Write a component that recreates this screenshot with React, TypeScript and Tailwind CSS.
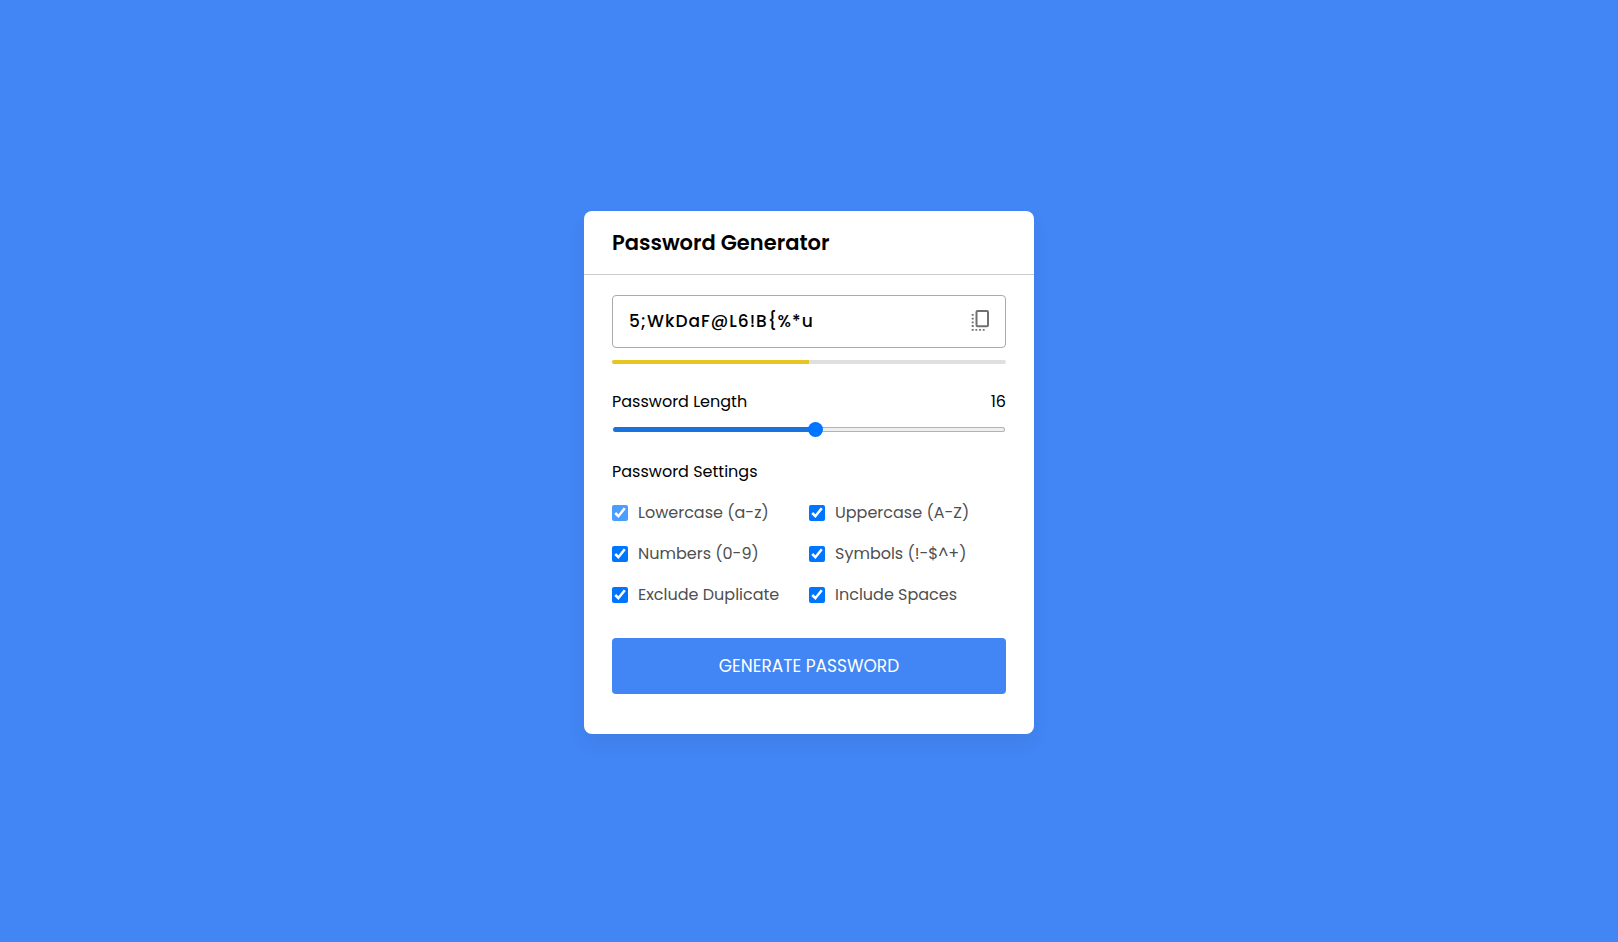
import { useState } from 'react'

type TOption = {
  id: string
  label: string
  locked?: boolean
}

const OPTIONS: TOption[] = [
  { id: 'lowercase', label: 'Lowercase (a-z)', locked: true },
  { id: 'uppercase', label: 'Uppercase (A-Z)' },
  { id: 'numbers', label: 'Numbers (0-9)' },
  { id: 'symbols', label: 'Symbols (!-$^+)' },
  { id: 'exc-duplicate', label: 'Exclude Duplicate' },
  { id: 'spaces', label: 'Include Spaces' },
]

const CHARACTERS: Record<string, string> = {
  lowercase: 'abcdefghijklmnopqrstuvwxyz',
  uppercase: 'ABCDEFGHIJKLMNOPQRSTUVWXYZ',
  numbers: '0123456789',
  symbols: '!$%&|[](){}:;.,*+-#@<>~',
}

const MIN_LENGTH = 1
const MAX_LENGTH = 30

const generatePassword = (length: number, selected: string[]) => {
  let pool = selected.map((id) => CHARACTERS[id] || '').join('')
  if (selected.includes('spaces')) pool += ' '
  const unique = selected.includes('exc-duplicate')
  let result = ''
  while (result.length < length) {
    const char = pool[Math.floor(Math.random() * pool.length)]
    if (unique && result.includes(char) && result.length < pool.length) continue
    result += char
  }
  return result
}

const CopyIcon = () => (
  <svg
    xmlns="http://www.w3.org/2000/svg"
    width="18"
    height="23"
    viewBox="0 0 18 23"
    fill="none"
    stroke="currentColor"
    strokeWidth="2"
  >
    <rect x="5.5" y="1" width="11.5" height="15.2" rx="1" />
    <path d="M1.7 4v1.8M1.7 7.7v1.8M1.7 11.4v1.8M1.7 15.1v1.8M1.7 18.9v1.8" />
    <path d="M4.4 19.8h1.8M8.1 19.8h1.8M11.8 19.8h1.8" strokeWidth="1.8" />
  </svg>
)

const StrengthBar = ({ length }: { length: number }) => (
  <div className="mt-3 h-1 rounded-full bg-[#dfdfdf] overflow-hidden">
    {length <= 8 ? (
      <div className="h-full w-1/5 bg-[#e64a4a]"></div>
    ) : length <= 16 ? (
      <div className="h-full w-1/2 bg-[#e8c622]"></div>
    ) : (
      <div className="h-full w-full bg-[#4285f4]"></div>
    )}
  </div>
)

export default function App() {
  const [length, setLength] = useState(16)
  const [password, setPassword] = useState('5;WkDaF@L6!B{%*u')
  const [selected, setSelected] = useState(OPTIONS.map((option) => option.id))

  const progress = ((length - MIN_LENGTH) / (MAX_LENGTH - MIN_LENGTH)) * 100

  const update = (nextLength: number, nextSelected: string[]) => {
    setLength(nextLength)
    setSelected(nextSelected)
    setPassword(generatePassword(nextLength, nextSelected))
  }

  const toggleOption = (id: string) => {
    update(length, selected.includes(id) ? selected.filter((item) => item !== id) : [...selected, id])
  }

  return (
    <main className="flex items-center justify-center min-h-screen pt-[3px] bg-[#4285f4] font-[Poppins,Inter,sans-serif] text-black">
      <div className="w-full max-w-[450px] rounded-lg bg-white shadow-[0_10px_20px_rgba(0,0,0,0.05)]">
        {/* Header */}
        <h1 className="px-7 py-4 text-[21px] leading-[31px] font-semibold border-b border-[#ccc]">
          Password Generator
        </h1>

        <div className="px-7 pt-5 pb-10">
          {/* Password */}
          <div className="flex items-center h-[53px] px-4 rounded border border-[#aaa]">
            <input
              type="text"
              value={password}
              readOnly
              aria-label="Generated password"
              className="flex-1 min-w-0 text-[17px] font-medium tracking-[1px] outline-none"
            />
            <button
              type="button"
              onClick={() => navigator.clipboard.writeText(password)}
              className="text-[#707070] hover:text-[#4285f4] cursor-pointer"
              aria-label="Copy password"
            >
              <CopyIcon />
            </button>
          </div>
          <StrengthBar length={length} />

          {/* Length */}
          <div className="flex justify-between mt-[25px] text-base leading-[26px]">
            <label htmlFor="length">Password Length</label>
            <span>{length}</span>
          </div>
          <div className="flex items-center h-4 mt-1.5 px-px">
            <input
              id="length"
              type="range"
              min={MIN_LENGTH}
              max={MAX_LENGTH}
              value={length}
              onChange={(e) => update(Number(e.target.value), selected)}
              className="w-full h-[5px] appearance-none rounded-full border border-transparent cursor-pointer [&::-webkit-slider-thumb]:appearance-none [&::-webkit-slider-thumb]:size-[15px] [&::-webkit-slider-thumb]:rounded-full [&::-webkit-slider-thumb]:bg-[#0075ff]"
              style={{
                background: `linear-gradient(#1a73dc, #1a73dc) 0 0 / ${progress}% 100% no-repeat border-box, linear-gradient(#efefef, #efefef) padding-box, linear-gradient(#b2b2b2, #b2b2b2) border-box`,
              }}
            />
          </div>

          {/* Settings */}
          <fieldset className="mt-[22px]">
            <legend className="text-base leading-[26px]">Password Settings</legend>
            <div className="grid grid-cols-2 gap-y-[15px] mt-[15px]">
              {OPTIONS.map(({ id, label, locked }) => (
                <div key={id} className="flex items-center">
                  <input
                    id={id}
                    type="checkbox"
                    checked={selected.includes(id)}
                    onChange={() => !locked && toggleOption(id)}
                    className={locked ? 'size-4 opacity-70 pointer-events-none' : 'size-4 cursor-pointer'}
                  />
                  <label htmlFor={id} className="pl-2.5 text-base leading-[26px] text-[#4f4f4f] whitespace-nowrap">
                    {label}
                  </label>
                </div>
              ))}
            </div>
          </fieldset>

          <button
            type="button"
            onClick={() => update(length, selected)}
            className="w-full h-14 mt-[30px] rounded bg-[#4285f4] text-white text-[17px] leading-[26px] uppercase cursor-pointer"
          >
            Generate Password
          </button>
        </div>
      </div>
    </main>
  )
}
